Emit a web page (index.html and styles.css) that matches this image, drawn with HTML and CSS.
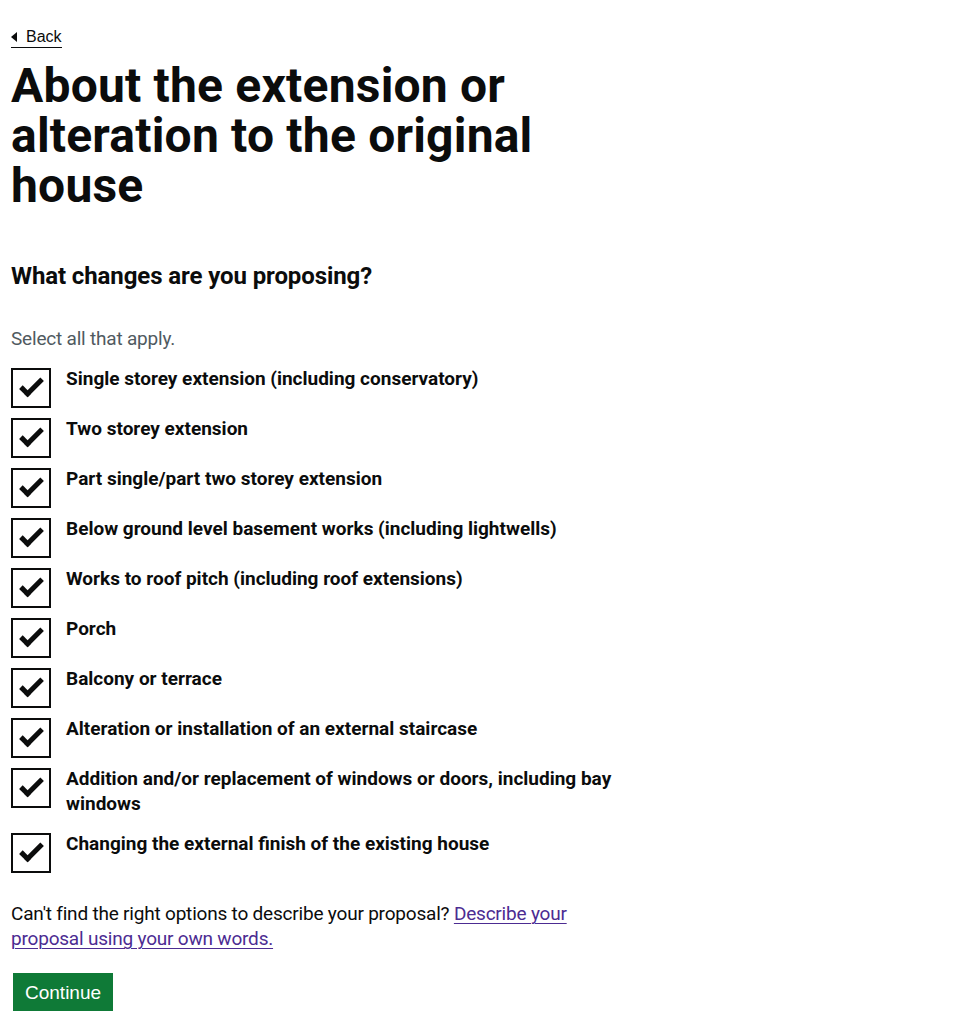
FILE: index.html
```html
<!DOCTYPE html>
<html lang="en">
<head>
<meta charset="utf-8">
<title>About the extension or alteration to the original house</title>
<link rel="stylesheet" href="styles.css">
</head>
<body>
<div class="page">
  <div class="back-row"><a class="back-link" href="#">Back</a></div>
  <main class="column">
    <h1 class="title">About the extension or alteration to the original house</h1>
    <fieldset class="fieldset">
      <legend class="question">What changes are you proposing?</legend>
      <div class="hint">Select all that apply.</div>
      <div class="checkboxes">
        <div class="item"><span class="box"></span><span class="label">Single storey extension (including conservatory)</span></div>
        <div class="item"><span class="box"></span><span class="label">Two storey extension</span></div>
        <div class="item"><span class="box"></span><span class="label">Part single/part two storey extension</span></div>
        <div class="item"><span class="box"></span><span class="label">Below ground level basement works (including lightwells)</span></div>
        <div class="item"><span class="box"></span><span class="label">Works to roof pitch (including roof extensions)</span></div>
        <div class="item"><span class="box"></span><span class="label">Porch</span></div>
        <div class="item"><span class="box"></span><span class="label">Balcony or terrace</span></div>
        <div class="item"><span class="box"></span><span class="label">Alteration or installation of an external staircase</span></div>
        <div class="item"><span class="box"></span><span class="label">Addition and/or replacement of windows or doors, including bay windows</span></div>
        <div class="item"><span class="box"></span><span class="label">Changing the external finish of the existing house</span></div>
      </div>
    </fieldset>
    <p class="body-text"><span>Can't find the right options to describe your proposal?</span> <a class="link" href="#">Describe your proposal using your own words.</a></p>
    <button class="button" type="button">Continue</button>
  </main>
</div>
</body>
</html>
```
FILE: styles.css
```css
html, body {
  margin: 0;
  padding: 0;
  background: #ffffff;
}

body {
  font-family: Roboto, "Liberation Sans", sans-serif;
  color: #0b0c0c;
}

.page {
  padding: 0 11px;
}

.back-row {
  display: flex;
  padding-top: 27px;
}

.back-link {
  position: relative;
  display: block;
  padding-left: 15px;
  font-family: "Liberation Sans", Arial, sans-serif;
  font-size: 16px;
  line-height: 20px;
  color: #0b0c0c;
  text-decoration: none;
  border-bottom: 1px solid #0b0c0c;
}

.back-link::before {
  content: "";
  position: absolute;
  left: 0;
  top: 5px;
  width: 0;
  height: 0;
  border-style: solid;
  border-color: transparent #0b0c0c transparent transparent;
  border-width: 5px 6px 5px 0;
}

.column {
  width: 620px;
}

.title {
  margin: 13px 0 0;
  font-size: 48px;
  line-height: 50px;
  font-weight: 700;
  letter-spacing: 0.2px;
}

.fieldset {
  margin: 50px 0 0;
  padding: 0;
  border: 0;
  min-width: 0;
}

.question {
  padding: 0;
  margin: 0;
  font-size: 24px;
  line-height: 30px;
  font-weight: 700;
  letter-spacing: -0.1px;
}

.hint {
  margin-top: 35px;
  font-size: 19px;
  line-height: 25px;
  color: #505a5f;
  letter-spacing: -0.2px;
}

.checkboxes {
  margin-top: 17px;
  display: flex;
  flex-direction: column;
  gap: 10px;
}

.item {
  display: flex;
  align-items: flex-start;
  min-height: 40px;
}

.box {
  position: relative;
  flex: 0 0 auto;
  width: 40px;
  height: 40px;
  box-sizing: border-box;
  border: 2px solid #0b0c0c;
  background: #ffffff;
}

.box::after {
  content: "";
  position: absolute;
  top: 9px;
  left: 7px;
  width: 18px;
  height: 7px;
  border: solid #0b0c0c;
  border-width: 0 0 5px 5px;
  transform: rotate(-45deg);
}

.label {
  margin-top: -2px;
  padding: 0 0 7px 15px;
  font-size: 19px;
  line-height: 25px;
  font-weight: 700;
}

.body-text {
  margin: 28px 0 0;
  font-size: 19px;
  line-height: 25px;
  letter-spacing: -0.2px;
}

.link {
  color: #4c2c92;
  text-decoration: underline;
  text-decoration-thickness: 1px;
  text-underline-offset: 3px;
}

.button {
  display: block;
  margin: 22px 0 0 2px;
  padding: 8px 10px 7px;
  border: 2px solid transparent;
  background: #0f7a37;
  box-shadow: 0 2px 0 #002d18;
  color: #ffffff;
  font-family: "Liberation Sans", Arial, sans-serif;
  font-size: 19px;
  line-height: 19px;
  border-radius: 0;
  cursor: pointer;
}
```
